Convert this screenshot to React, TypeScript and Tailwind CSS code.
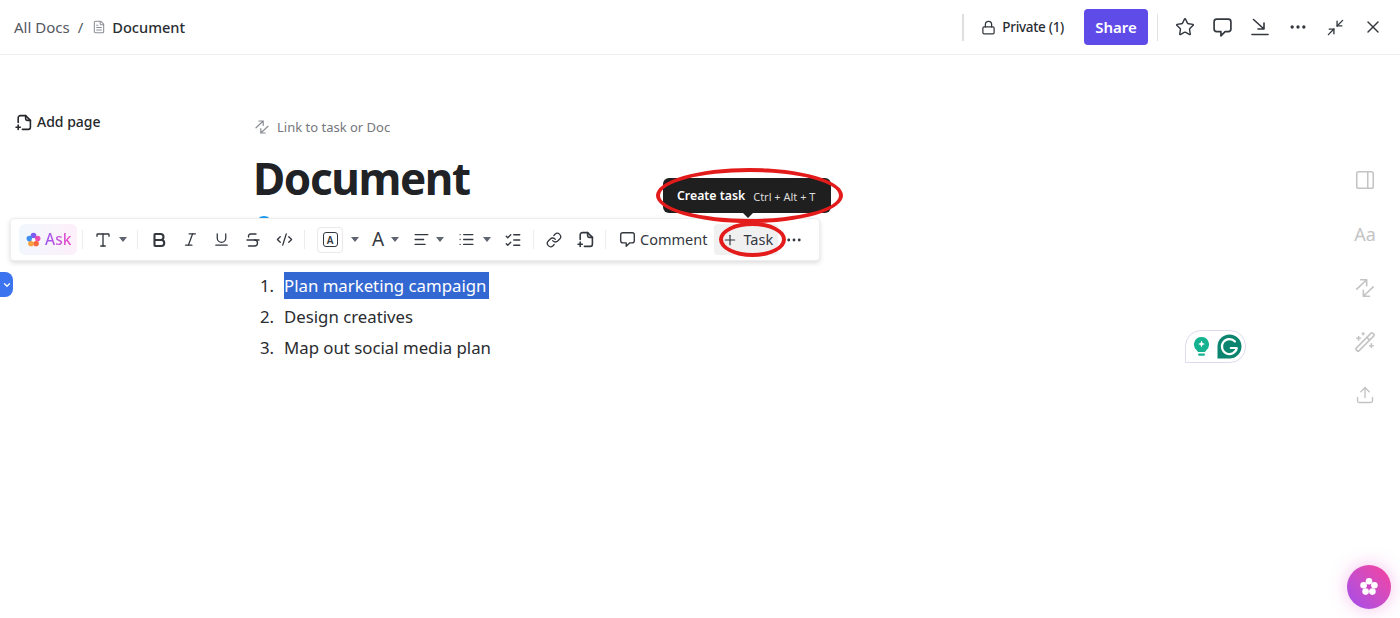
import React from 'react';
import {
  AlignLeft,
  Bold,
  ChevronDown,
  CodeXml,
  Ellipsis,
  FileText,
  Italic,
  Link,
  List,
  ListChecks,
  Lock,
  Minimize2,
  PanelRight,
  Plus,
  Star,
  Strikethrough,
  Type,
  Underline,
  Upload,
  WandSparkles,
  X,
} from 'lucide-react';

const LinkArrows = ({ size = 18, className = '' }: { size?: number; className?: string }) => (
  <svg width={size} height={size} viewBox="0 0 20 20" fill="none" stroke="currentColor" strokeWidth="1.5" strokeLinecap="round" strokeLinejoin="round" className={className}>
    <path d="M2.5 11 L11.5 2.5 M6 2.5 H11.5 V8" />
    <path d="M17.5 9 L8.5 17.5 M14 17.5 H8.5 V12" />
  </svg>
);

const AddPageIcon = ({ size = 16, className = '' }: { size?: number; className?: string }) => (
  <svg width={size} height={size} viewBox="0 0 16 16" fill="none" stroke="currentColor" strokeWidth="1.5" strokeLinecap="round" strokeLinejoin="round" className={className}>
    <path d="M3 8V3.500A2 2 0 0 1 5 1.500h5L14.500 6v6.500a2 2 0 0 1-2 2H7" />
    <path d="M10 1.500V4.500a1.500 1.500 0 0 0 1.500 1.500h3" />
    <path d="M3 10.500v4M1 12.500h4" />
  </svg>
);

const CommentIcon = ({ size = 18, className = '' }: { size?: number; className?: string }) => (
  <svg width={size} height={size} viewBox="0 0 20 20" fill="none" stroke="currentColor" strokeWidth="1.6" strokeLinejoin="round" className={className}>
    <path d="M4.500 2h11A2.500 2.500 0 0 1 18 4.500v7a2.500 2.500 0 0 1-2.500 2.500h-3L8.500 18v-4h-4A2.500 2.500 0 0 1 2 11.500v-7A2.500 2.500 0 0 1 4.500 2z" />
  </svg>
);

const Caret = ({ className = '' }: { className?: string }) => (
  <svg width="8" height="5" viewBox="0 0 8 5" className={`shrink-0 text-[#5f6570] ${className}`}>
    <path d="M0 0h8L4 5z" fill="currentColor" />
  </svg>
);

const Divider = ({ className = '' }: { className?: string }) => (
  <div className={`h-[19px] w-px shrink-0 bg-[#ececee] ${className}`} />
);

function Toolbar() {
  const ic = 'shrink-0 text-[#33373e]';
  return (
    <div className="absolute left-[10px] top-[163px] z-10 flex h-[43px] w-[810px] items-center rounded border border-[#eeeeef] bg-white pl-[8px] text-[#33373e] shadow-[0_2px_5px_rgba(0,0,0,0.14)]">
      <div className="flex h-[31px] w-[58px] shrink-0 items-center gap-[4px] rounded-md bg-gradient-to-r from-[#f1f7fd] to-[#fdf0fa] pl-[7px]">
        <svg width="15" height="15" viewBox="0 0 16 16">
          <circle cx="8" cy="3.800" r="3" fill="#7c5cf0" />
          <circle cx="12.400" cy="7" r="3" fill="#e84fb0" />
          <circle cx="10.700" cy="12.200" r="3" fill="#f7683f" />
          <circle cx="5.300" cy="12.200" r="3" fill="#f9a03c" />
          <circle cx="3.600" cy="7" r="3" fill="#3f8ff0" />
          <circle cx="8" cy="8.300" r="2" fill="#fff" />
        </svg>
        <span className="bg-gradient-to-r from-[#9a55ef] to-[#ee45c8] bg-clip-text text-[15.5px] font-medium leading-none text-transparent">Ask</span>
      </div>
      <Divider className="ml-[5px]" />
      <Type size={18} strokeWidth={1.8} className={`${ic} ml-[11px]`} />
      <Caret className="ml-[7px]" />
      <Divider className="ml-[10px]" />
      <Bold size={18} strokeWidth={2.8} className={`${ic} ml-[12px]`} />
      <Italic size={17} strokeWidth={1.8} className={`${ic} ml-[14px]`} />
      <Underline size={17} strokeWidth={1.8} className={`${ic} ml-[14px]`} />
      <Strikethrough size={18} strokeWidth={1.8} className={`${ic} ml-[14px]`} />
      <CodeXml size={17} strokeWidth={1.9} className={`${ic} ml-[14px]`} />
      <Divider className="ml-[11px]" />
      <div className="ml-[12px] flex h-[26px] w-[26px] shrink-0 items-center justify-center rounded border border-[#e9e9eb]">
        <div className="flex h-[15px] w-[15px] items-center justify-center rounded-[3px] border-[1.5px] border-[#33373e] text-[10px] font-semibold leading-none">A</div>
      </div>
      <Caret className="ml-[8px]" />
      <span className="ml-[13px] w-[15px] shrink-0 text-[19px] leading-none">A</span>
      <Caret className="ml-[4px]" />
      <AlignLeft size={17} strokeWidth={1.8} className={`${ic} ml-[14px]`} />
      <Caret className="ml-[6px]" />
      <List size={17} strokeWidth={1.8} className={`${ic} ml-[14px]`} />
      <Caret className="ml-[8px]" />
      <ListChecks size={18} strokeWidth={1.8} className={`${ic} ml-[13px]`} />
      <Divider className="ml-[11px]" />
      <Link size={16} strokeWidth={1.9} className={`${ic} ml-[12px]`} />
      <AddPageIcon size={17} className={`${ic} ml-[15px]`} />
      <Divider className="ml-[11px]" />
      <CommentIcon size={17} className={`${ic} ml-[13px]`} />
      <span className="ml-[4px] shrink-0 text-[14.5px] leading-none">Comment</span>
      <div className="ml-[7px] flex h-[31px] w-[64px] shrink-0 items-center gap-[5px] rounded bg-[#f0f0f1] pl-[8px]">
        <Plus size={16} strokeWidth={1.8} />
        <span className="text-[14.5px] leading-none">Task</span>
      </div>
      <Ellipsis size={18} strokeWidth={1.8} className={`${ic} ml-[7px]`} />
    </div>
  );
}

function TaskCallout() {
  return (
    <>
      <div className="absolute left-[663px] top-[123px] z-20 flex h-[35px] w-[168px] items-center rounded-md bg-[#1f1f1f] pl-[14px] pt-[2px]">
        <span className="text-[12.3px] font-semibold leading-none text-white">Create task</span>
        <span className="ml-[8px] text-[11px] leading-none text-[#dcdcdc]">Ctrl + Alt + T</span>
        <div className="absolute left-[80px] top-[35px] h-0 w-0 border-x-[5px] border-t-[5px] border-x-transparent border-t-[#1f1f1f]" />
      </div>
      <div className="absolute left-[656px] top-[113px] z-30 h-[55px] w-[187px] rounded-[50%] border-[4px] border-[#e31b1b]" />
      <div className="absolute left-[719px] top-[167px] z-30 h-[35px] w-[67px] rounded-[50%] border-[4px] border-[#e31b1b]" />
    </>
  );
}

export default function App() {
  const railIcon = 'text-[#c4c4c6]';
  return (
    <div className="relative h-screen w-screen overflow-hidden bg-white font-['Noto_Sans',sans-serif] text-[#25272b]">
      <header className="flex h-[55px] items-center border-b border-[#ededee] pl-[14px]">
        <span className="pt-px text-[15px] text-[#54585f]">All Docs</span>
        <span className="ml-[8px] pt-px text-[15px] text-[#54585f]">/</span>
        <FileText size={14} strokeWidth={1.8} className="ml-[9px] text-[#8b8e94]" />
        <span className="ml-[6px] pt-px text-[14.6px] font-medium text-[#2a2e34]">Document</span>
        <div className="ml-auto flex items-center">
          <div className="h-[27px] w-[2px] bg-[#dedee0]" />
          <Lock size={15} strokeWidth={2} className="ml-[17px] text-[#33373e]" />
          <span className="ml-[6px] pt-px text-[13.5px] font-medium tracking-[-0.3px] text-[#2a2e34]">Private (1)</span>
          <button className="ml-[20px] flex h-[36px] w-[64px] items-center justify-center rounded bg-[#5f4be8] text-[15px] font-semibold text-white">Share</button>
          <div className="ml-[9px] h-[27px] w-px bg-[#e2e2e4]" />
          <Star size={20} strokeWidth={1.7} className="ml-[17px] text-[#33373e]" />
          <CommentIcon size={21} className="ml-[17px] text-[#33373e]" />
          <svg width="18" height="18" viewBox="0 0 18 18" fill="none" stroke="#33373e" strokeWidth="1.6" strokeLinecap="round" strokeLinejoin="round" className="ml-[18px]">
            <path d="M2.500 1.500 L13 11 M13 5 V11 H7" />
            <path d="M1 16.500 H17" />
          </svg>
          <Ellipsis size={20} strokeWidth={2} className="ml-[19px] text-[#33373e]" />
          <Minimize2 size={19} strokeWidth={1.7} className="ml-[18px] text-[#33373e]" />
          <X size={20} strokeWidth={1.7} className="ml-[18px] mr-[17px] text-[#33373e]" />
        </div>
      </header>

      <div className="relative flex h-[563px]">
        <aside className="w-[254px] shrink-0 pl-[15px] pt-[57px]">
          <div className="flex h-[20px] items-center gap-[5px]">
            <AddPageIcon size={17} className="text-[#25272b]" />
            <span className="text-[14px] font-medium leading-none">Add page</span>
          </div>
        </aside>

        <main className="flex-1 pt-[62px]">
          <div className="flex h-[20px] items-center gap-[7px] text-[#74777d]">
            <LinkArrows size={16} className="text-[#8b8e94]" />
            <span className="text-[13px] leading-none">Link to task or Doc</span>
          </div>
          <h1 className="-ml-px mt-[9px] text-[44px] font-bold leading-[64px] tracking-[-1.4px] text-[#202226]">Document</h1>
          <div className="ml-[2px] mt-[6px] h-[16px] w-[16px] rounded-full bg-[#1e9bf0]" />
          <ol className="mt-[38px] text-[16.8px] leading-[31px] text-[#2a2c30]">
            <li className="flex h-[31px] items-center">
              <span className="ml-[6px] w-[24px]">1.</span>
              <span className="flex h-[27px] items-center bg-[#3367d1] pr-[3px] text-white">Plan marketing campaign</span>
            </li>
            <li className="flex h-[31px] items-center">
              <span className="ml-[6px] w-[24px]">2.</span>
              <span>Design creatives</span>
            </li>
            <li className="flex h-[31px] items-center">
              <span className="ml-[6px] w-[24px]">3.</span>
              <span>Map out social media plan</span>
            </li>
          </ol>
        </main>

        <aside className="flex w-[70px] shrink-0 flex-col items-center gap-[32px] pt-[114px]">
          <PanelRight size={22} strokeWidth={1.7} className={railIcon} />
          <span className="flex h-[22px] items-center text-[18px] leading-none text-[#c4c4c6]">Aa</span>
          <LinkArrows size={22} className={railIcon} />
          <WandSparkles size={22} strokeWidth={1.7} className={railIcon} />
          <Upload size={20} strokeWidth={1.7} className={railIcon} />
        </aside>

        <Toolbar />
        <TaskCallout />

        {/* collapsed page list handle */}
        <div className="absolute left-0 top-[217px] flex h-[25px] w-[13px] items-center justify-center rounded-r-lg bg-[#3b74ee]">
          <ChevronDown size={10} strokeWidth={3} className="text-white" />
        </div>

        {/* grammarly widget */}
        <div className="absolute left-[1185px] top-[275px] flex h-[33px] w-[61px] items-center rounded-r-[16px] rounded-tl-[16px] border border-[#dcdcee] bg-white pl-[7px]">
          <svg width="17" height="22" viewBox="0 0 17 22">
            <path d="M8.500 1a7.500 7.500 0 0 1 4.600 13.400c-.6.500-.9 1-.9 1.600H4.800c0-.6-.3-1.100-.9-1.600A7.500 7.500 0 0 1 8.500 1z" fill="#15b28f" />
            <path d="M8.500 4.500l1 2.500 2.500 1-2.500 1-1 2.500-1-2.500-2.500-1 2.500-1z" fill="#fff" />
            <rect x="5" y="17.500" width="7" height="2.200" rx="1.100" fill="#15b28f" />
          </svg>
          <svg width="25" height="25" viewBox="0 0 25 25" className="ml-[7px]">
            <path d="M12.500 0.500a12 12 0 1 1 0 24H0.500v-12a12 12 0 0 1 12-12z" fill="#0b8570" />
            <path d="M18 7.500a7.500 7.500 0 1 0 1.800 6.500h-6" fill="none" stroke="#fff" strokeWidth="2.200" strokeLinecap="round" strokeLinejoin="round" />
          </svg>
        </div>

        {/* floating action button */}
        <div className="absolute left-[1347px] top-[510px] flex h-[44px] w-[44px] items-center justify-center rounded-full bg-gradient-to-tr from-[#a24aec] to-[#f83d9c] shadow-[0_0_18px_rgba(225,70,200,0.35)]">
          <svg width="20" height="20" viewBox="0 0 20 20">
            <g fill="#fff">
              <circle cx="10" cy="4.300" r="3.300" />
              <circle cx="15.400" cy="8.200" r="3.300" />
              <circle cx="13.400" cy="14.600" r="3.300" />
              <circle cx="6.600" cy="14.600" r="3.300" />
              <circle cx="4.600" cy="8.200" r="3.300" />
            </g>
            <circle cx="10" cy="10" r="1.600" fill="#d043c4" />
          </svg>
        </div>
      </div>
    </div>
  );
}
